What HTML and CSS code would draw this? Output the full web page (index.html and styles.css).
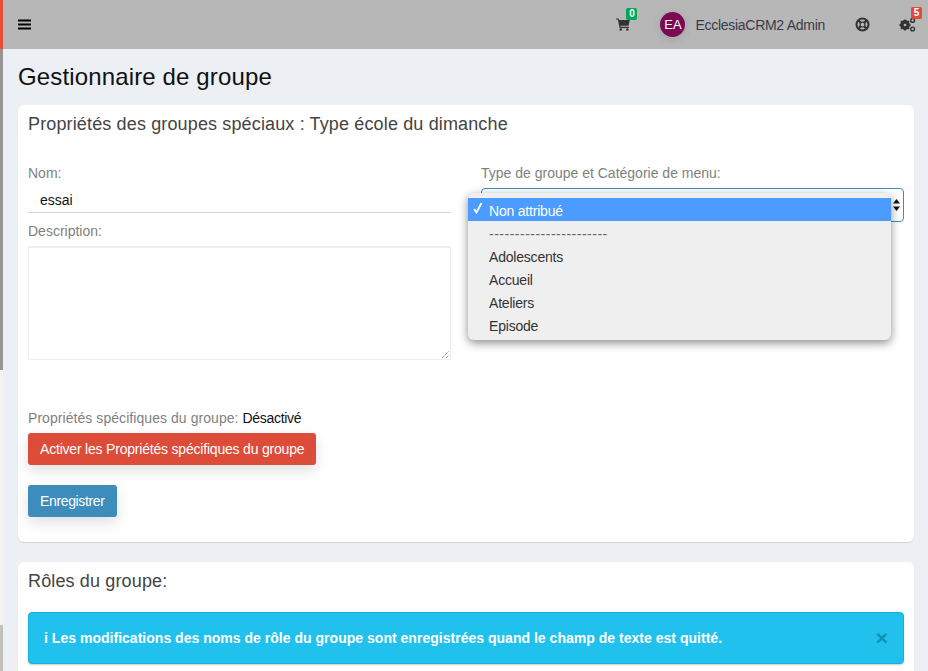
FILE: index.html
```html
<!DOCTYPE html>
<html lang="fr">
    <head>
        <meta charset="UTF-8">
        <meta name="viewport" content="width=device-width, initial-scale=1.0">
        <title>Gestionnaire de groupe</title>
        <link rel="stylesheet" href="styles.css">
    </head>
    <body>
        <div class="side-strip">
            <div class="strip-red"></div>
            <div class="strip-gray"></div>
            <div class="strip-light"></div>
            <div class="strip-beige"></div>
        </div>
        <div class="main">
            <header class="topbar">
                <svg class="burger" viewBox="0 0 13 11" width="13" height="11">
                    <path d="M0 0.5h13v2h-13zM0 4.5h13v2h-13zM0 8.5h13v2h-13z" fill="#000"/>
                </svg>
                <div class="top-right">
                    <div class="top-item cart">
                        <svg viewBox="0 0 14 13" width="14" height="13">
                            <path d="M0 0.5h2.6l0.5 1.6h10.7l-1.3 5.6H4.3l0.3 1.1h8.2v1.1H3.6L1.8 1.6H0z" fill="#333"/>
                            <circle cx="4.8" cy="11.5" r="1.3" fill="#333"/>
                            <circle cx="11.3" cy="11.5" r="1.3" fill="#333"/>
                        </svg>
                        <span class="badge badge-green">0</span>
                    </div>
                    <div class="user">
                        <span class="avatar">EA</span>
                        <span class="user-name">EcclesiaCRM2 Admin</span>
                    </div>
                    <div class="top-item help">
                        <svg viewBox="0 0 16 16" width="15" height="15">
                            <circle cx="8" cy="8" r="6.4" fill="none" stroke="#333" stroke-width="2.2"/>
                            <circle cx="8" cy="8" r="2.6" fill="none" stroke="#333" stroke-width="1.2"/>
                            <path d="M3.4 3.4L6 6M12.6 3.4L10 6M3.4 12.6L6 10M12.6 12.6L10 10" stroke="#333" stroke-width="2.4"/>
                        </svg>
                    </div>
                    <div class="top-item gears">
                        <svg viewBox="0 0 17 15" width="17" height="15">
                            <circle cx="6" cy="8" r="3.6" fill="none" stroke="#333" stroke-width="2.6"/>
                            <path d="M6 2.4v11.2M0.4 8h11.2M2 4l8 8M10 4l-8 8" stroke="#333" stroke-width="1.7"/>
                            <circle cx="6" cy="8" r="1.3" fill="#b7b7b7"/>
                            <circle cx="13.6" cy="3.4" r="1.9" fill="none" stroke="#333" stroke-width="1.4"/>
                            <circle cx="13.6" cy="12" r="1.9" fill="none" stroke="#333" stroke-width="1.4"/>
                        </svg>
                        <span class="badge badge-red">5</span>
                    </div>
                </div>
            </header>

            <div class="content">
                <h1>Gestionnaire de groupe</h1>

                <section class="card card-props">
                    <h3>Propriétés des groupes spéciaux : Type école du dimanche</h3>
                    <div class="form-cols">
                        <div class="col">
                            <label>Nom:</label>
                            <div class="name-input">essai</div>
                            <label class="desc-label">Description:</label>
                            <div class="textarea">
                                <svg class="grip" viewBox="0 0 7 7" width="7" height="7">
                                    <path d="M0 7L7 0M4 7L7 4" stroke="#555" stroke-width="1" stroke-dasharray="1 1"/>
                                </svg>
                            </div>
                        </div>
                        <div class="col">
                            <label>Type de groupe et Catégorie de menu:</label>
                            <div class="select-box">
                                <svg class="select-arrows" viewBox="0 0 7 12" width="7" height="12">
                                    <path d="M3.5 0L7 4.6H0zM3.5 12L0 7.4h7z" fill="#111"/>
                                </svg>
                                <ul class="select-menu">
                                    <li class="selected">
                                        <svg class="tick" viewBox="0 0 10 12" width="10" height="12">
                                            <path d="M1.2 7l2.2 3.4L8.6 1" fill="none" stroke="#fff" stroke-width="1.8"/>
                                        </svg>
                                        Non attribué
                                    </li>
                                    <li class="dashes">-----------------------</li>
                                    <li>Adolescents</li>
                                    <li>Accueil</li>
                                    <li>Ateliers</li>
                                    <li>Episode</li>
                                </ul>
                            </div>
                        </div>
                    </div>
                    <p class="specific"><span class="specific-label">Propriétés spécifiques du groupe:</span> <span class="specific-value">Désactivé</span></p>
                    <button class="btn btn-red">Activer les Propriétés spécifiques du groupe</button>
                    <button class="btn btn-blue">Enregistrer</button>
                </section>

                <section class="card card-roles">
                    <h3>Rôles du groupe:</h3>
                    <div class="alert">
                        <span class="alert-text"><b class="alert-i">i</b> Les modifications des noms de rôle du groupe sont enregistrées quand le champ de texte est quitté.</span>
                        <span class="alert-close">×</span>
                    </div>
                </section>
            </div>
        </div>
    </body>
</html>
```

FILE: styles.css
```css
html, body {
    height: 100%;
}
body {
    margin: 0;
    display: flex;
    height: 671px;
    overflow: hidden;
    font-family: "Liberation Sans", Arial, sans-serif;
    font-size: 14px;
    color: #333;
    background: #ecf0f5;
}
.side-strip {
    width: 3px;
    flex: none;
    display: flex;
    flex-direction: column;
}
.strip-red { height: 49px; background: #e74c3c; }
.strip-gray { height: 321px; background: #959595; }
.strip-light { height: 255px; background: #f3f3f3; }
.strip-beige { flex: 1; background: #c4c0bb; }

.main {
    flex: 1;
    min-width: 0;
}
.topbar {
    height: 49px;
    background: #b7b7b7;
    display: flex;
    align-items: center;
    justify-content: space-between;
    padding: 0 12px 0 15px;
}
.burger {
    display: block;
}
.top-right {
    display: flex;
    align-items: center;
}
.top-item {
    position: relative;
    display: flex;
}
.cart {
    margin-right: 30px;
}
.help {
    margin-left: 30px;
    margin-right: 29px;
}
.badge {
    position: absolute;
    font-size: 10px;
    font-weight: bold;
    line-height: 12px;
    color: #fff;
    width: 11px;
    height: 12px;
    text-align: center;
    border-radius: 2px;
}
.badge-green {
    background: #00a65a;
    top: -10px;
    left: 10px;
}
.badge-red {
    background: #dd4b39;
    top: -10px;
    left: 12px;
}
.user {
    display: flex;
    align-items: center;
    gap: 10px;
}
.avatar {
    width: 25px;
    height: 25px;
    border-radius: 50%;
    background: #7a0a55;
    color: #fff;
    font-size: 13px;
    line-height: 25px;
    text-align: center;
    box-shadow: 0 2px 8px rgba(0,0,0,0.12);
}
.user-name {
    font-size: 14px;
    letter-spacing: -0.28px;
    color: #3a3a48;
}

.content {
    padding: 0 14px 0 15px;
}
h1 {
    font-size: 24px;
    font-weight: normal;
    letter-spacing: 0.14px;
    color: #111;
    line-height: 28px;
    margin: 0;
    padding: 14px 0 14px;
}
h3 {
    font-size: 18px;
    font-weight: normal;
    letter-spacing: 0.14px;
    line-height: 20px;
    margin: 0;
    color: #444;
}
.card {
    background: #fff;
    border-radius: 6px;
    padding: 9px 10px 0;
    box-shadow: 0 1px 1px rgba(0,0,0,0.12);
}
.card-props {
    height: 437px;
    box-sizing: border-box;
    margin-bottom: 20px;
}
.card-roles {
    padding-top: 9px;
    height: 200px;
}
.form-cols {
    display: grid;
    grid-template-columns: 423px 423px;
    gap: 30px;
    margin-top: 30px;
}
label {
    display: block;
    color: #7f7f7f;
    line-height: 18px;
}
.name-input {
    height: 30px;
    margin-top: 1px;
    box-sizing: border-box;
    padding: 8px 12px 0;
    line-height: 18px;
    color: #111;
    border-bottom: 1px solid #d2d6de;
}
.desc-label {
    margin-top: 9px;
}
.textarea {
    position: relative;
    height: 114px;
    margin-top: 6px;
    box-sizing: border-box;
    border: 1px solid #eeeeee;
    border-top-width: 2px;
}
.grip {
    position: absolute;
    right: 1px;
    bottom: 1px;
}
.select-box {
    position: relative;
    height: 34px;
    margin-top: 6px;
    box-sizing: border-box;
    border: 1px solid #3c8dbc;
    border-radius: 4px;
}
.select-arrows {
    position: absolute;
    right: 3px;
    top: 10px;
}
.select-menu {
    position: absolute;
    top: 4px;
    left: -14px;
    width: 423px;
    margin: 0;
    padding: 5px 0 0;
    height: 147px;
    box-sizing: border-box;
    list-style: none;
    background: #efefef;
    border-radius: 6px;
    box-shadow: 0 3px 10px rgba(0,0,0,0.45);
}
.select-menu li {
    height: 23px;
    box-sizing: border-box;
    padding: 2px 0 0 21px;
    line-height: 23px;
    letter-spacing: -0.2px;
    color: #333;
    position: relative;
}
.select-menu .selected {
    background: #4c9bff;
    color: #fff;
}
.select-menu .dashes {
    color: #666;
    letter-spacing: 0.5px;
}
.tick {
    position: absolute;
    left: 5px;
    top: 4px;
}
.specific {
    margin: 49px 0 0;
    line-height: 18px;
    color: #111;
}
.specific-label {
    color: #7f7f7f;
    letter-spacing: 0.06px;
}
.specific-value {
    letter-spacing: -0.3px;
}
.btn {
    display: block;
    border: none;
    border-radius: 3px;
    color: #fff;
    font-family: inherit;
    font-size: 14px;
    height: 32px;
    padding: 0 12px;
    box-shadow: 0 6px 14px rgba(0,0,0,0.12);
}
.btn-red {
    background: #dd4b39;
    letter-spacing: -0.2px;
    margin-top: 6px;
}
.btn-blue {
    background: #3c8dbc;
    letter-spacing: -0.35px;
    margin-top: 20px;
}
.alert {
    margin-top: 21px;
    height: 52px;
    box-sizing: border-box;
    background: #20c1ed;
    border: 1px solid #14b0db;
    border-radius: 4px;
    padding: 0 15px;
    display: flex;
    align-items: center;
    justify-content: space-between;
    color: #fff;
    font-weight: bold;
    font-size: 14px;
    box-shadow: 0 1px 2px rgba(0,0,0,0.2);
}
.alert-text {
    letter-spacing: 0.02px;
}
.alert-close {
    color: #12799a;
    font-size: 21px;
    opacity: 0.7;
}
```
